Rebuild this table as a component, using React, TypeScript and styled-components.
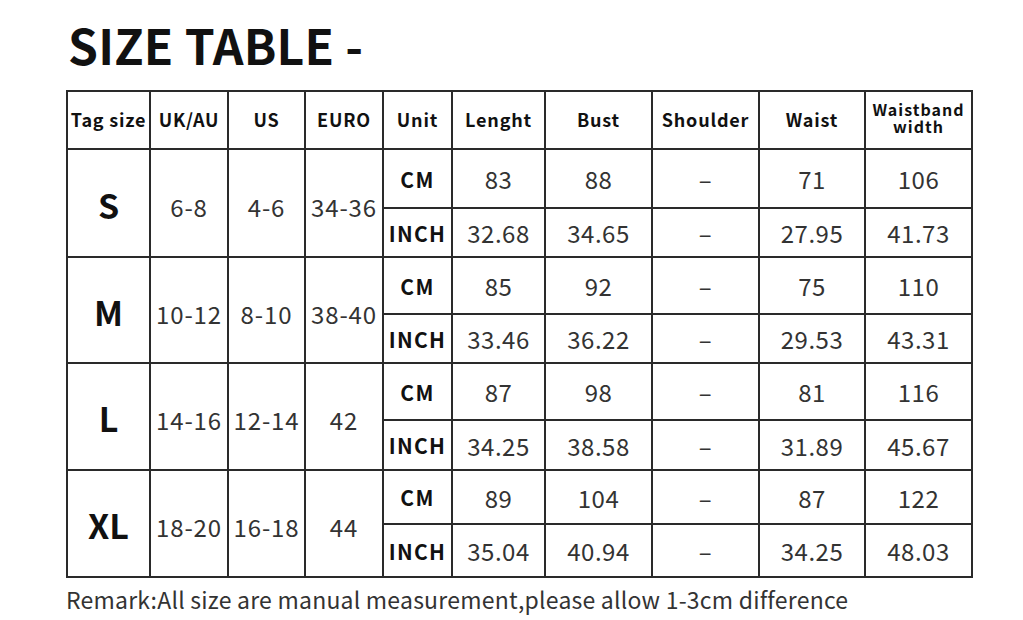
import React from 'react'
import styled, { createGlobalStyle } from 'styled-components'

const GlobalStyle = createGlobalStyle`
    body {
        margin: 0;
        background: #ffffff;
        font-family: "Noto Sans CJK SC", "Noto Sans", sans-serif;
    }
`

type Group = {
    tag: string
    uk: string
    us: string
    euro: string
    cm: string[]
    inch: string[]
}

const groups: Group[] = [
    { tag: 'S', uk: '6-8', us: '4-6', euro: '34-36', cm: ['83', '88', '–', '71', '106'], inch: ['32.68', '34.65', '–', '27.95', '41.73'] },
    { tag: 'M', uk: '10-12', us: '8-10', euro: '38-40', cm: ['85', '92', '–', '75', '110'], inch: ['33.46', '36.22', '–', '29.53', '43.31'] },
    { tag: 'L', uk: '14-16', us: '12-14', euro: '42', cm: ['87', '98', '–', '81', '116'], inch: ['34.25', '38.58', '–', '31.89', '45.67'] },
    { tag: 'XL', uk: '18-20', us: '16-18', euro: '44', cm: ['89', '104', '–', '87', '122'], inch: ['35.04', '40.94', '–', '34.25', '48.03'] },
]

const headers = ['Tag size', 'UK/AU', 'US', 'EURO', 'Unit', 'Lenght', 'Bust', 'Shoulder', 'Waist']

export default function App() {
    return (
        <Page>
            <GlobalStyle />
            <Title>SIZE TABLE -</Title>
            <Grid>
                {headers.map((h) => (
                    <HeadCell key={h}>{h}</HeadCell>
                ))}
                <HeadCell $small>
                    Waistband
                    <br />
                    width
                </HeadCell>
                {groups.map((g) => (
                    <React.Fragment key={g.tag}>
                        <SizeCell>{g.tag}</SizeCell>
                        <RangeCell>{g.uk}</RangeCell>
                        <RangeCell>{g.us}</RangeCell>
                        <RangeCell>{g.euro}</RangeCell>
                        <UnitCell>CM</UnitCell>
                        {g.cm.map((v, i) => (
                            <ValueCell key={'cm' + i}>{v}</ValueCell>
                        ))}
                        <UnitCell>INCH</UnitCell>
                        {g.inch.map((v, i) => (
                            <ValueCell key={'in' + i}>{v}</ValueCell>
                        ))}
                    </React.Fragment>
                ))}
            </Grid>
            <Remark>Remark:All size are manual measurement,please allow 1-3cm difference</Remark>
        </Page>
    )
}

const Page = styled.div`
    width: 1023px;
    height: 620px;
    box-sizing: border-box;
    padding: 20px 0 0 66px;
    overflow: hidden;
`

const Title = styled.h1`
    margin: 0 0 22px 2px;
    font-size: 48px;
    line-height: 48px;
    font-weight: 700;
    color: #111;
    letter-spacing: 0.2px;
`

const Grid = styled.div`
    display: grid;
    width: 907px;
    box-sizing: border-box;
    grid-template-columns: 81px 76px 75px 76px 67px 91px 105px 105px 104px 105px;
    grid-template-rows: 56px 57px 47px 55px 47px 55px 48px 52px 51px;
    gap: 2px;
    padding: 2px;
    background: #2a2a2a;
`

const Cell = styled.div`
    background: #ffffff;
    display: flex;
    align-items: center;
    justify-content: center;
    text-align: center;
    white-space: nowrap;
`

const HeadCell = styled(Cell)<{ $small?: boolean }>`
    font-weight: 700;
    color: #111;
    font-size: ${(p) => (p.$small ? '16px' : '18px')};
    line-height: ${(p) => (p.$small ? '17px' : '20px')};
    letter-spacing: ${(p) => (p.$small ? '1px' : '0.8px')};
    padding-bottom: ${(p) => (p.$small ? '4px' : '2px')};
`

const SizeCell = styled(Cell)`
    grid-row: span 2;
    font-size: 34px;
    font-weight: 700;
    color: #111;
    padding-top: 2px;
`

const RangeCell = styled(Cell)`
    grid-row: span 2;
    font-size: 24px;
    font-weight: 400;
    color: #333;
    letter-spacing: 0.9px;
    padding-top: 6px;
`

const UnitCell = styled(Cell)`
    font-size: 21px;
    font-weight: 700;
    color: #111;
    letter-spacing: 1.3px;
`

const ValueCell = styled(Cell)`
    font-size: 24px;
    font-weight: 400;
    color: #333;
    letter-spacing: 0.5px;
`

const Remark = styled.p`
    margin: 6px 0 0 0;
    font-size: 23px;
    line-height: 30px;
    color: #333;
    letter-spacing: 0.22px;
`
